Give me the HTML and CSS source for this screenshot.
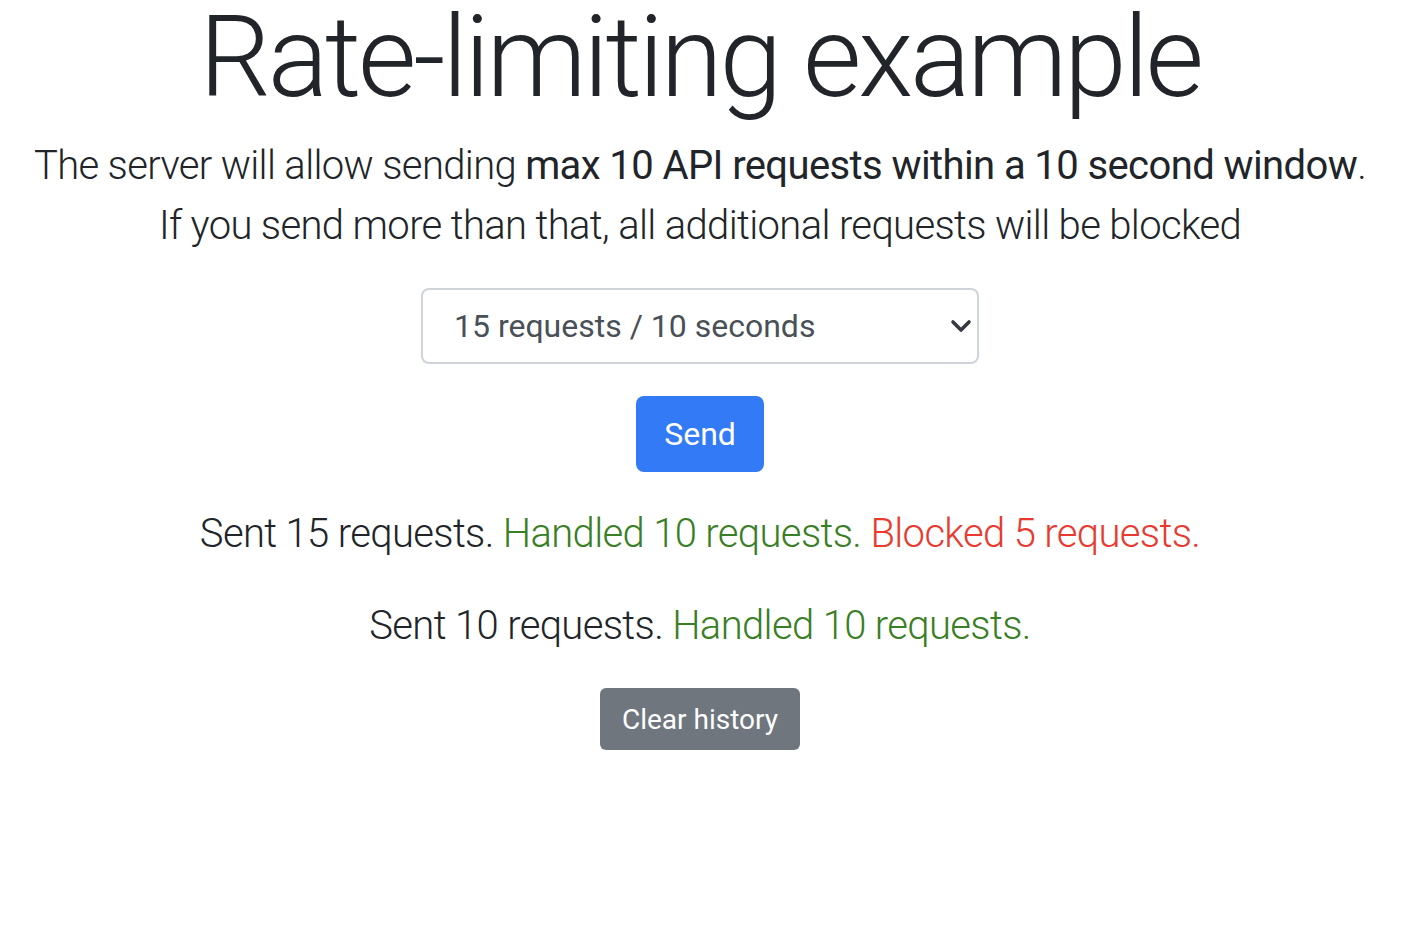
FILE: index.html
```html
<!DOCTYPE html>
<html lang="en">
<head>
<meta charset="utf-8">
<title>Rate-limiting example</title>
<link rel="stylesheet" href="styles.css">
</head>
<body>
<main class="page">
  <h1 class="title">Rate-limiting example</h1>
  <p class="lead">The server will allow sending <b class="strong">max 10 API requests within a 10 second window</b>.<br>If you send more than that, all additional requests will be blocked</p>
  <div class="form">
    <div class="select-wrap">
      <select class="select">
        <option>15 requests / 10 seconds</option>
      </select>
      <svg class="chevron" width="22" height="14" viewBox="0 0 22 14"><path d="M3 3 L11 11 L19 3" fill="none" stroke="#343a40" stroke-width="3.6" stroke-linecap="round" stroke-linejoin="round"/></svg>
    </div>
    <button class="btn btn-primary">Send</button>
  </div>
  <p class="lead result">Sent 15 requests. <span class="ok">Handled 10 requests.</span> <span class="bad">Blocked 5 requests.</span></p>
  <p class="lead result">Sent 10 requests. <span class="ok">Handled 10 requests.</span></p>
  <button class="btn btn-secondary">Clear history</button>
</main>
</body>
</html>
```

FILE: styles.css
```css
html, body {
  margin: 0;
  padding: 0;
  background: #ffffff;
}
body {
  font-family: Roboto, "Noto Sans", "Liberation Sans", sans-serif;
  color: #212529;
}
.page {
  width: 1400px;
  display: flex;
  flex-direction: column;
  align-items: center;
  text-align: center;
}
.title {
  font-size: 113px;
  font-weight: 300;
  line-height: 116px;
  letter-spacing: -3.3px;
  margin: 0 0 20px 0;
}
.lead {
  font-size: 40px;
  font-weight: 300;
  line-height: 60px;
  letter-spacing: -0.65px;
  margin: 0 0 32px 0;
  white-space: nowrap;
}
.strong {
  font-weight: 400;
  letter-spacing: -0.6px;
}
.form {
  display: flex;
  flex-direction: column;
  align-items: center;
  gap: 32px;
}
.select-wrap {
  position: relative;
  width: 558px;
}
.select {
  appearance: none;
  -webkit-appearance: none;
  width: 558px;
  height: 76px;
  box-sizing: border-box;
  border: 2px solid #ced4da;
  border-radius: 8px;
  background: #fff;
  padding: 0 60px 0 31px;
  font-family: inherit;
  font-size: 32px;
  font-weight: 400;
  color: #495057;
}
.chevron {
  position: absolute;
  right: 7px;
  top: 31px;
}
.btn {
  border: none;
  font-family: inherit;
  color: #fff;
  font-weight: 400;
  cursor: pointer;
}
.btn-primary {
  background: #337bf6;
  height: 76px;
  width: 128px;
  border-radius: 8px;
  font-size: 32px;
  margin-bottom: 32px;
}
.result {
  margin-bottom: 32px;
}
.ok {
  color: #3a7e26;
}
.bad {
  color: #e83a2f;
}
.btn-secondary {
  background: #6f767e;
  height: 62px;
  width: 200px;
  border-radius: 6px;
  font-size: 28px;
}
```
